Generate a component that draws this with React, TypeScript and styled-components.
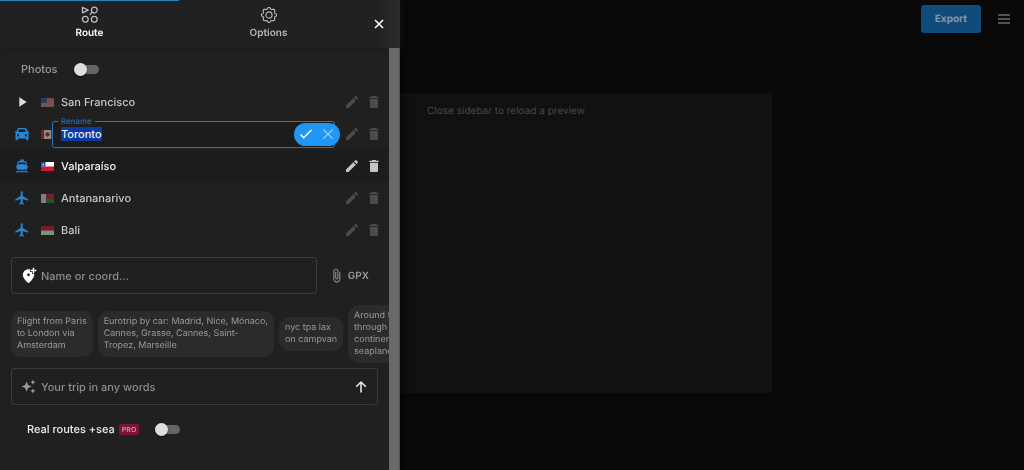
import React, { useEffect, useRef } from "react";
import styled, { createGlobalStyle } from "styled-components";
import { MdFlight, MdDirectionsBoat, MdPlayArrow, MdEdit, MdDelete, MdAddLocationAlt, MdAutoAwesome, MdAttachFile } from "react-icons/md";

const GlobalStyle = createGlobalStyle`
  * { box-sizing: border-box; }
  body {
    margin: 0;
    background: #090909;
    color: #c8c8c8;
    font-family: Inter, "Liberation Sans", sans-serif;
    font-size: 11px;
    line-height: 16px;
    text-rendering: geometricPrecision;
  }
  button { padding: 0; border: 0; background: none; color: inherit; font: inherit; text-rendering: inherit; cursor: pointer; }
  input { text-rendering: inherit; }
  svg { display: block; flex: none; }
`;

const Page = styled.div`
  min-height: 100vh;
`;

const TopBar = styled.header`
  display: flex;
  justify-content: flex-end;
  align-items: center;
  gap: 17px;
  padding: 5px 14px;
`;

const ExportButton = styled.button`
  height: 28px;
  padding: 0 14px;
  border-radius: 3px;
  background: #114b7c;
  color: #8396a5;
  font-size: 10px;
  font-weight: 700;
`;

const MenuButton = styled.button`
  color: #6c6c6c;
`;

const Stage = styled.main`
  display: flex;
  justify-content: center;
  padding: 55px 12px 32px 0;
`;

const Preview = styled.section`
  width: 100%;
  max-width: 532px;
  min-height: 300px;
  padding: 10px;
  border-radius: 4px;
  background: #111;
  color: #484848;
  font-size: 10px;
  text-align: center;
`;

const Sidebar = styled.aside`
  position: fixed;
  inset: 0 auto 0 0;
  display: flex;
  flex-direction: column;
  width: 400px;
  max-width: 100%;
  background: #202020;
  box-shadow: 0 0 12px #000;
`;

const Tabs = styled.div`
  display: flex;
  flex: none;
  height: 48px;
  background: linear-gradient(90deg, #212121 94%, #2b2b2b);
  box-shadow: 0 1px 8px #1b1b1b;
`;

const Tab = styled.button<{ $active?: boolean }>`
  display: flex;
  flex: 1;
  flex-direction: column;
  align-items: center;
  gap: 1px;
  padding-top: 5px;
  border-top: 1px solid ${(p) => (p.$active ? "#2b80c0" : "transparent")};
  color: ${(p) => (p.$active ? "#fff" : "#b8b8b8")};
  font-size: 10px;
  font-weight: 600;

  svg { color: #bcbcbc; }
`;

const CloseButton = styled.button`
  display: flex;
  align-items: center;
  justify-content: center;
  width: 42px;
  color: #fff;
`;

const Body = styled.div`
  display: flex;
  flex: 1;
  min-height: 0;
`;

const Content = styled.div`
  flex: 1;
  min-width: 0;
  overflow: hidden;
`;

const Scrollbar = styled.div`
  width: 11px;
  background: #696969;
  border-right: 1px solid #555;
`;

const SwitchRow = styled.label<{ $route?: boolean }>`
  display: flex;
  align-items: center;
  height: ${(p) => (p.$route ? "24px" : "38px")};
  padding-top: ${(p) => (p.$route ? "0" : "4px")};
  padding-left: ${(p) => (p.$route ? "27px" : "21px")};
  margin-top: ${(p) => (p.$route ? "12px" : "0")};
  gap: 16px;
  color: ${(p) => (p.$route ? "#ececec" : "#999")};
  font-weight: 500;
`;

const Switch = styled.input`
  appearance: none;
  display: flex;
  align-items: center;
  width: 25px;
  height: 9px;
  margin: 0;
  border-radius: 5px;
  background: #656565;

  &::before {
    content: "";
    width: 13px;
    height: 13px;
    border-radius: 50%;
    background: #dedede;
    box-shadow: 0 1px 2px #0008;
  }
`;

const LabelGroup = styled.span`
  display: flex;
  align-items: center;
  gap: 4px;
`;

const ProBadge = styled.span`
  padding: 0 3px;
  border-radius: 2px;
  background: #7d123c;
  color: #c995a9;
  font-size: 7px;
  font-weight: 600;
  line-height: 11px;
`;

const Stops = styled.ul`
  margin: 0 0 11px;
  padding: 0;
  list-style: none;
`;

const Stop = styled.li<{ $hover?: boolean }>`
  display: flex;
  align-items: center;
  height: 32px;
  padding: 0 4px 0 14px;
  background: ${(p) => (p.$hover ? "#1c1c1c" : "transparent")};
  color: ${(p) => (p.$hover ? "#f4f4f4" : "#c8c8c8")};
`;

const Transport = styled.span<{ $start?: boolean }>`
  display: flex;
  justify-content: center;
  width: 16px;
  margin-right: 11px;
  color: ${(p) => (p.$start ? "#dcdcdc" : "#2487d8")};
`;

const FlagBox = styled.span<{ $hover?: boolean }>`
  width: 20px;
  opacity: ${(p) => (p.$hover ? 1 : 0.55)};
`;

const StopName = styled.span`
  flex: 1;
  font-weight: 500;
`;

const RowAction = styled.button<{ $hover?: boolean }>`
  display: flex;
  justify-content: center;
  width: 22px;
  color: ${(p) => (p.$hover ? "#c6c6c6" : "#4c4c4c")};
`;

const RenameField = styled.div`
  position: relative;
  flex: 1;
  min-width: 0;
  height: 27px;
  margin: 0 6px 0 -9px;
  border: 1px solid #2478b8;
  border-radius: 3px;
  background: #1c1c1c;
`;

const RenameLabel = styled.label`
  position: absolute;
  top: -6px;
  left: 5px;
  padding: 0 3px;
  background: #202020;
  color: #2478b8;
  font-size: 8px;
  line-height: 10px;
`;

const RenameInput = styled.input`
  width: 100%;
  height: 100%;
  padding: 0 50px 0 8px;
  border: 0;
  outline: 0;
  background: none;
  color: #e8e8e8;
  font: inherit;
  font-weight: 500;

  &::selection { background: #0b3aa0; color: #e8eefc; }
`;

const RenameActions = styled.div`
  position: absolute;
  top: 1px;
  right: -6px;
  display: flex;
  align-items: center;
  justify-content: space-between;
  width: 46px;
  height: 23px;
  padding: 0 5px 0 6px;
  border-radius: 12px;
  background: #2196f3;
  color: #fff;

  button + button { color: #a6d5fa; }
`;

const AddRow = styled.div`
  display: flex;
  align-items: center;
  gap: 12px;
  padding: 0 20px 0 11px;
`;

const TextBox = styled.div`
  display: flex;
  align-items: center;
  flex: 1;
  min-width: 0;
  height: 37px;
  padding: 0 10px 0 8px;
  gap: 4px;
  border: 1px solid #3b3b3b;
  border-radius: 3px;
  color: #979797;

  input {
    flex: 1;
    min-width: 0;
    padding: 0;
    border: 0;
    outline: 0;
    background: none;
    color: #ddd;
    font: inherit;
    font-weight: 500;
  }
  input::placeholder { color: #8c8c8c; opacity: 1; }
`;

const FieldIcon = styled.span<{ $strong?: boolean }>`
  display: flex;
  justify-content: center;
  width: 17px;
  color: ${(p) => (p.$strong ? "#fff" : "#979797")};
`;

const GpxButton = styled.button`
  display: flex;
  align-items: center;
  gap: 4px;
  color: #9c9c9c;
  font-size: 10px;
  font-weight: 600;
`;

const Examples = styled.div`
  display: flex;
  align-items: center;
  gap: 5px;
  margin: 11px 0 5px;
  padding-left: 11px;
  overflow: hidden;
`;

const Example = styled.button`
  flex: none;
  padding: 5px 6px;
  border-radius: 11px;
  background: #2b2b2b;
  color: #9a9a9a;
  font-size: 9px;
  line-height: 12px;
  text-align: left;
  white-space: pre-line;
`;

const PromptRow = styled.div`
  display: flex;
  padding: 0 11px;
`;

const SendButton = styled.button`
  color: #e6e6e6;
`;

type Country = "us" | "ca" | "cl" | "mg" | "id";

const flagArt: Record<Country, React.ReactNode> = {
  us: (
    <>
      <path fill="#b7606a" d="M0 0h13v9H0z" />
      <path stroke="#d9a9ae" strokeWidth=".7" d="M0 2h13M0 4h13M0 6h13M0 8h13" />
      <path fill="#3c4c85" d="M0 0h6v5H0z" />
    </>
  ),
  ca: (
    <>
      <path fill="#e8e0e0" d="M0 0h13v9H0z" />
      <path fill="#c81e2c" d="M0 0h3v9H0zM10 0h3v9h-3zM6.5 1.5l.7 1.2.8-.3-.1 1.2 1.1-.2-.4 1.2.4.3-1.9 1.3h-.3v1h-.6v-1h-.3L4 4.9l.4-.3L4 3.4l1.1.2L5 2.4l.8.3z" />
    </>
  ),
  cl: (
    <>
      <path fill="#fff" d="M0 0h13v9H0z" />
      <path fill="#d11a32" d="M0 4.5h13V9H0z" />
      <path fill="#1d4fa8" d="M0 0h4.5v4.5H0z" />
      <path fill="#fff" d="M2.2 1.2l.35.8h.85l-.7.5.3.9-.8-.5-.8.5.3-.9-.7-.5h.85z" />
    </>
  ),
  mg: (
    <>
      <path fill="#d0d0d0" d="M0 0h5v9H0z" />
      <path fill="#b3202e" d="M5 0h8v4.5H5z" />
      <path fill="#476f35" d="M5 4.5h8V9H5z" />
    </>
  ),
  id: (
    <>
      <path fill="#c4182a" d="M0 0h13v4.5H0z" />
      <path fill="#e0e0e0" d="M0 4.5h13V9H0z" />
    </>
  ),
};

const Flag = ({ country }: { country: Country }) => (
  <svg width="13" height="9" viewBox="0 0 13 9" aria-hidden="true">
    {flagArt[country]}
  </svg>
);

const RouteIcon = () => (
  <svg width="18" height="18" viewBox="0 0 18 18" fill="none" stroke="currentColor" strokeWidth="1.3" strokeLinejoin="round">
    <path d="M1.5 1.4v5.4L7.2 4.1zM8.8 8.8l2.3-2.7" />
    <circle cx="13.3" cy="4.1" r="2.9" />
    <circle cx="4.3" cy="13.2" r="2.9" />
    <circle cx="13.3" cy="13.2" r="2.9" />
  </svg>
);

const gearPath = (() => {
  const steps = 96;
  const points = Array.from({ length: steps }, (_, i) => {
    const angle = (i / steps) * Math.PI * 2;
    const radius = 6.8 + 0.8 * Math.tanh(Math.cos(angle * 8) * 1.5);
    return `${(9 + radius * Math.cos(angle)).toFixed(2)} ${(9 + radius * Math.sin(angle)).toFixed(2)}`;
  });
  return `M${points.join("L")}Z`;
})();

const GearIcon = () => (
  <svg width="18" height="18" viewBox="0 0 18 18" fill="none" stroke="currentColor" strokeWidth="1.1" strokeLinejoin="round">
    <path d={gearPath} />
    <circle cx="9" cy="9" r="3.1" />
  </svg>
);

const CarIcon = () => (
  <svg width="14" height="14" viewBox="0.5 1 14 13" preserveAspectRatio="none" fill="currentColor" fillRule="evenodd">
    <path d="M4.2 1.9h6.6q.8 0 1.1.8l1 2.3h1.2q.4 0 .4.4v.5q0 .4-.4.4h-.6l.2.3q.3.5.3 1.1v4.600q0 .9-.9.9h-.6q-.9 0-.9-.9v-.7H3.400v.7q0 .9-.9.9h-.6q-.9 0-.9-.9V7.700q0-.6.3-1.100l.2-.3H.9q-.4 0-.4-.4v-.5q0-.4.4-.4h1.200l1-2.300q.3-.8 1.100-.8zM4.600 3.200l-1 2.500h7.800l-1-2.500zM3.600 7.600a1.100 1.100 0 1 0 .01 0zM11.400 7.600a1.100 1.100 0 1 0 .01 0z" />
  </svg>
);

const CrossIcon = ({ size, width }: { size: number; width: number }) => (
  <svg width={size} height={size} viewBox="0 0 12 12" fill="none" stroke="currentColor" strokeWidth={width}>
    <path d="M2 2l8 8M10 2l-8 8" />
  </svg>
);

const CheckIcon = () => (
  <svg width="12" height="12" viewBox="0 0 12 12" fill="none" stroke="currentColor" strokeWidth="1.5">
    <path d="M.5 6.5l3.2 3.2L11.5 2" />
  </svg>
);

const MenuIcon = () => (
  <svg width="12" height="10" viewBox="0 0 12 10" stroke="currentColor" strokeWidth="1.3">
    <path d="M0 1h12M0 5h12M0 9h12" />
  </svg>
);

const ArrowUpIcon = () => (
  <svg width="12" height="12" viewBox="0 0 12 12" fill="none" stroke="currentColor" strokeWidth="1.6" strokeLinejoin="round">
    <path d="M6 11.5V1M1.2 5.7L6 1l4.8 4.7" />
  </svg>
);

interface StopData {
  name: string;
  country: Country;
  icon: React.ReactNode;
  start?: boolean;
  hover?: boolean;
  renaming?: boolean;
}

const stops: StopData[] = [
  { name: "San Francisco", country: "us", icon: <MdPlayArrow size={16} />, start: true },
  { name: "Toronto", country: "ca", icon: <CarIcon />, renaming: true },
  { name: "Valparaíso", country: "cl", icon: <MdDirectionsBoat size={14} />, hover: true },
  { name: "Antananarivo", country: "mg", icon: <MdFlight size={16} /> },
  { name: "Bali", country: "id", icon: <MdFlight size={16} /> },
];

const examples = [
  "Flight from Paris\nto London via\nAmsterdam",
  "Eurotrip by car: Madrid, Nice, Mónaco,\nCannes, Grasse, Cannes, Saint-\nTropez, Marseille",
  "nyc tpa lax\non campvan",
  "Around the world\nthrough all\ncontinents by\nseaplane",
];

const Rename = ({ name }: { name: string }) => {
  const input = useRef<HTMLInputElement>(null);
  useEffect(() => {
    input.current?.focus();
    input.current?.select();
  }, []);
  return (
    <RenameField>
      <RenameLabel htmlFor="rename">Rename</RenameLabel>
      <RenameInput id="rename" ref={input} defaultValue={name} />
      <RenameActions>
        <button aria-label="Save name"><CheckIcon /></button>
        <button aria-label="Cancel"><CrossIcon size={14} width={1} /></button>
      </RenameActions>
    </RenameField>
  );
};

export default function App() {
  return (
    <Page>
      <GlobalStyle />
      <TopBar>
        <ExportButton>Export</ExportButton>
        <MenuButton aria-label="Menu"><MenuIcon /></MenuButton>
      </TopBar>
      <Stage>
        <Preview>Close sidebar to reload a preview</Preview>
      </Stage>
      <Sidebar>
        <Tabs role="tablist">
          <Tab $active role="tab" aria-selected="true"><RouteIcon />Route</Tab>
          <Tab role="tab" aria-selected="false"><GearIcon />Options</Tab>
          <CloseButton aria-label="Close sidebar"><CrossIcon size={12} width={1.6} /></CloseButton>
        </Tabs>
        <Body>
          <Content>
            <SwitchRow>
              Photos
              <Switch type="checkbox" role="switch" />
            </SwitchRow>
            <Stops>
              {stops.map((stop) => (
                <Stop key={stop.name} $hover={stop.hover}>
                  <Transport $start={stop.start}>{stop.icon}</Transport>
                  <FlagBox $hover={stop.hover}><Flag country={stop.country} /></FlagBox>
                  {stop.renaming ? <Rename name={stop.name} /> : <StopName>{stop.name}</StopName>}
                  <RowAction $hover={stop.hover} aria-label={`Rename ${stop.name}`}><MdEdit size={16} /></RowAction>
                  <RowAction $hover={stop.hover} aria-label={`Delete ${stop.name}`}><MdDelete size={16} /></RowAction>
                </Stop>
              ))}
            </Stops>
            <AddRow>
              <TextBox>
                <FieldIcon $strong><MdAddLocationAlt size={17} /></FieldIcon>
                <input aria-label="Name or coordinates" placeholder="Name or coord..." />
              </TextBox>
              <GpxButton><MdAttachFile size={15} />GPX</GpxButton>
            </AddRow>
            <Examples>
              {examples.map((example) => (
                <Example key={example}>{example}</Example>
              ))}
            </Examples>
            <PromptRow>
              <TextBox>
                <FieldIcon><MdAutoAwesome size={15} /></FieldIcon>
                <input aria-label="Your trip" placeholder="Your trip in any words" />
                <SendButton aria-label="Send"><ArrowUpIcon /></SendButton>
              </TextBox>
            </PromptRow>
            <SwitchRow $route>
              <LabelGroup>
                Real routes +sea
                <ProBadge>PRO</ProBadge>
              </LabelGroup>
              <Switch type="checkbox" role="switch" />
            </SwitchRow>
          </Content>
          <Scrollbar />
        </Body>
      </Sidebar>
    </Page>
  );
}
